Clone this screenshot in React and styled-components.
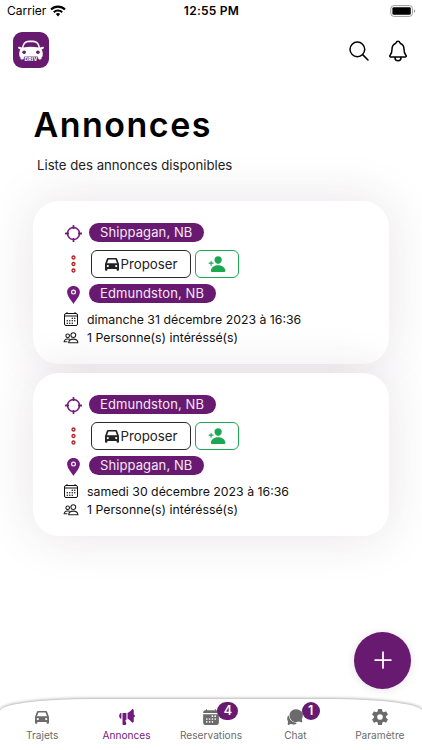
import React from 'react'
import styled, { createGlobalStyle } from 'styled-components'
import {
    IoSearchOutline,
    IoNotificationsOutline,
    IoPersonAdd,
    IoCalendarOutline,
    IoCalendar,
    IoMegaphone,
    IoChatbubbles,
    IoSettingsSharp,
    IoAdd,
} from 'react-icons/io5'

const rides = [
    {
        from: { name: 'Shippagan, NB', width: 115 },
        to: { name: 'Edmundston, NB', width: 127 },
        date: 'dimanche 31 décembre 2023 à 16:36',
        people: 1,
    },
    {
        from: { name: 'Edmundston, NB', width: 127 },
        to: { name: 'Shippagan, NB', width: 115 },
        date: 'samedi 30 décembre 2023 à 16:36',
        people: 1,
    },
]

const tabs = [
    { label: 'Trajets', icon: <CarIcon /> },
    { label: 'Annonces', icon: <IoMegaphone />, active: true },
    { label: 'Reservations', icon: <IoCalendar />, badge: 4 },
    { label: 'Chat', icon: <IoChatbubbles />, badge: 1 },
    { label: 'Paramètre', icon: <IoSettingsSharp /> },
]

function CarIcon() {
    return (
        <svg width="1em" height="1em" viewBox="0 0 18 18" fill="currentColor">
            <path
                fillRule="evenodd"
                d="M5.400 3h7.200c.9 0 1.500.5 1.700 1.300L16 9v5.700c0 .7-.3 1-.9 1h-.6c-.6 0-.9-.3-.9-1V14H4.400v.7c0 .7-.3 1-.9 1h-.6c-.6 0-.9-.3-.9-1V9l1.700-4.700C3.900 3.500 4.500 3 5.400 3zM5.500 4.500 4 8.300h10l-1.500-3.800zM4.800 10a1.100 1.100 0 1 0 0 2.200 1.100 1.100 0 0 0 0-2.200zm8.400 0a1.100 1.100 0 1 0 0 2.200 1.100 1.100 0 0 0 0-2.200z"
            />
        </svg>
    )
}

const WifiIcon = () => (
    <svg width="16" height="12" viewBox="0 0 16 12" fill="none" stroke="#000" strokeWidth="2.1">
        <path d="M1 4.5a10 10 0 0 1 14 0" />
        <path d="M3.8 7.2a6 6 0 0 1 8.4 0" />
        <path d="M5.8 9.1a3.1 3.1 0 0 1 4.4 0L8 11.4z" fill="#000" stroke="none" />
    </svg>
)

const BatteryIcon = () => (
    <svg width="26" height="12" viewBox="0 0 26 12">
        <rect x=".8" y=".6" width="21.6" height="10.8" rx="3" fill="none" stroke="#9b9b9b" />
        <rect x="2.4" y="2.2" width="18.4" height="7.6" rx="1.4" />
        <path d="M24 4.2c1.6.5 1.6 3.1 0 3.6z" fill="#999" />
    </svg>
)

const DrivCar = () => (
    <svg width="26" height="22" viewBox="0 0 26 22">
        <path
            d="M3.9 7.4C4.8 3.8 6.3 1.5 8.5 1c2.8-.6 6.2-.6 9 0 2.2.5 3.7 2.8 4.6 6.4l2.7-.6c1.2-.1 1.4 1.4.5 1.9l-1.7.8c1 1.6 1.3 3.5 1.1 5.8-.1 1.2-.5 1.9-1.2 2.1v1c0 1.5-3.3 1.5-3.3 0v-.9H5.8v.9c0 1.5-3.3 1.5-3.3 0v-1c-.7-.2-1.1-.9-1.2-2.1-.2-2.300.1-4.200 1.100-5.800L.7 8.700C-.2 8.200 0 6.700 1.200 6.800z"
            fill="#fff"
        />
        <path d="M5.4 7.4c.8-2.700 2-4.500 3.800-4.900 2.400-.5 5.200-.5 7.600 0 1.800.4 3 2.200 3.800 4.900-4.700-1-10.500-1-15.200 0z" fill="#681a70" />
        <circle cx="6.1" cy="12.3" r="1.8" fill="#681a70" />
        <circle cx="19.9" cy="12.3" r="1.8" fill="#681a70" />
        <rect x="6.2" y="16.6" width="13.6" height="5.4" fill="#681a70" />
    </svg>
)

const TargetIcon = () => (
    <svg width="17" height="17" viewBox="0.5 0.5 17 17" fill="none" stroke="#731b7d" strokeWidth="1.6">
        <circle cx="9" cy="9" r="6" />
        <path d="M9 1.2v2.5M9 14.3v2.5M1.2 9h2.5M14.3 9h2.5" strokeWidth="1.8" strokeLinecap="round" />
    </svg>
)

const DotsIcon = () => (
    <svg width="5" height="18" viewBox="0 0 5 18" fill="none" stroke="#b51d20" strokeWidth="1.3">
        <circle cx="2.5" cy="2.5" r="1.5" />
        <circle cx="2.5" cy="9" r="1.5" />
        <circle cx="2.5" cy="15.5" r="1.5" />
    </svg>
)

const PinIcon = () => (
    <svg width="13" height="18" viewBox="0 0 13 18">
        <path d="M6.5 0C2.9 0 .1 2.7.1 6.1c0 4.2 4.7 9.3 6.4 11.8 1.7-2.5 6.4-7.6 6.4-11.8C12.9 2.7 10.1 0 6.5 0z" fill="#731b7d" />
        <circle cx="6.5" cy="6.1" r="1.9" fill="none" stroke="#fff" strokeWidth="1.2" />
    </svg>
)

const PeopleIcon = () => (
    <svg viewBox="-0.5 -2 16 16" fill="none" stroke="#222" strokeWidth="1.1" strokeLinejoin="round">
        <circle cx="9.8" cy="3.1" r="2.4" />
        <path d="M5.2 10.7c.1-2.5 2-3.6 4.6-3.6s4.4 1.1 4.6 3.6z" />
        <circle cx="4.2" cy="3.8" r="1.8" />
        <path d="M6.3 7.3C3.5 6.4.8 7.4.6 9.8h3.3" />
    </svg>
)

const Ride = ({ ride }) => (
    <Card>
        <Row>
            <Mark $drop={1}><TargetIcon /></Mark>
            <City $width={ride.from.width}>{ride.from.name}</City>
        </Row>
        <Actions>
            <Mark><DotsIcon /></Mark>
            <ProposeButton><CarIcon />Proposer</ProposeButton>
            <InviteButton aria-label="Inviter"><IoPersonAdd /></InviteButton>
        </Actions>
        <Row>
            <Mark $drop={3}><PinIcon /></Mark>
            <City $width={ride.to.width}>{ride.to.name}</City>
        </Row>
        <Details>
            <Detail>
                <IoCalendarOutline />
                <span>{ride.date}</span>
            </Detail>
            <Detail>
                <PeopleIcon />
                <span>{ride.people} Personne(s) intéréssé(s)</span>
            </Detail>
        </Details>
    </Card>
)

const App = () => {
    return (
        <Screen>
            <GlobalStyle />
            <StatusBar>
                <Carrier>Carrier <WifiIcon /></Carrier>
                <Clock>12:55 PM</Clock>
                <Battery><BatteryIcon /></Battery>
            </StatusBar>
            <Header>
                <Logo>
                    <DrivCar />
                    <LogoName>DRIV</LogoName>
                </Logo>
                <HeaderIcons>
                    <IoSearchOutline />
                    <IoNotificationsOutline />
                </HeaderIcons>
            </Header>
            <Title>Annonces</Title>
            <Subtitle>Liste des annonces disponibles</Subtitle>
            <List>
                {rides.map((ride) => <Ride key={ride.date} ride={ride} />)}
            </List>
            <AddButton aria-label="Ajouter"><IoAdd /></AddButton>
            <TabBar>
                {tabs.map(({ label, icon, badge, active }) => (
                    <Tab key={label} $active={active}>
                        <TabIcon>
                            {icon}
                            {badge && <Badge>{badge}</Badge>}
                        </TabIcon>
                        {label}
                    </Tab>
                ))}
            </TabBar>
        </Screen>
    )
}

export default App

const GlobalStyle = createGlobalStyle`
    * {
        box-sizing: border-box;
    }

    body {
        margin: 0;
        background: #fff;
    }

    button {
        font: inherit;
        padding: 0;
        background: none;
    }

    svg {
        display: block;
        flex-shrink: 0;
    }
`

const Screen = styled.div`
    position: relative;
    display: flex;
    flex-direction: column;
    width: 422px;
    height: 750px;
    overflow: hidden;
    background: #fff;
    color: #111;
    font-family: Inter, "Liberation Sans", sans-serif;
`

const StatusBar = styled.div`
    display: grid;
    grid-template-columns: 1fr auto 1fr;
    align-items: center;
    height: 22px;
    padding: 0 6px 0 7px;
    color: #000;
`

const Carrier = styled.div`
    display: flex;
    align-items: center;
    gap: 4px;
    margin-top: -1px;
    font-size: 12px;
`

const Clock = styled.div`
    margin-top: -1px;
    font-size: 12px;
    font-weight: 600;
    letter-spacing: 0.25px;
`

const Battery = styled.div`
    justify-self: end;
    margin-top: -1px;
`

const Header = styled.header`
    display: flex;
    justify-content: space-between;
    height: 46px;
    padding: 10px 12px 0 13px;
`

const Logo = styled.div`
    display: flex;
    flex-direction: column;
    align-items: center;
    width: 36px;
    height: 36px;
    padding-top: 8px;
    border-radius: 9px;
    background: #681a70;
`

const LogoName = styled.div`
    margin-top: -6px;
    color: #fff;
    font-size: 5px;
    line-height: 6px;
    font-weight: 800;
    letter-spacing: 0.2px;
`

const HeaderIcons = styled.div`
    display: flex;
    align-items: center;
    gap: 15px;
    height: 38px;
    font-size: 24px;
    color: #000;
`

const Title = styled.h1`
    margin: 34px 0 0 33.5px;
    font-size: 34px;
    line-height: 46px;
    font-weight: 600;
    letter-spacing: 1.5px;
    color: #000;
`

const Subtitle = styled.p`
    margin: 7px 0 0 37px;
    font-size: 13.2px;
    line-height: 20px;
    color: #222;
`

const List = styled.main`
    display: flex;
    flex-direction: column;
    gap: 9px;
    margin: 26px 33px 0;
`

const Card = styled.article`
    height: 163px;
    padding: 22px 30px 0;
    border-radius: 26px;
    background: #fff;
    box-shadow: 0 0 50px rgba(80, 50, 70, 0.13);
`

const Row = styled.div`
    display: flex;
    align-items: center;
    gap: 5px;
    height: 19px;
`

const Mark = styled.div`
    display: flex;
    justify-content: center;
    width: 21px;
    margin-top: ${({ $drop }) => $drop || 0}px;
`

const City = styled.div`
    width: ${({ $width }) => $width}px;
    height: 19px;
    padding-left: 11px;
    border-radius: 10px;
    background: #681a70;
    color: #f5e7f7;
    font-size: 13px;
    line-height: 18px;
    letter-spacing: 0.1px;
    white-space: nowrap;
`

const Actions = styled.div`
    display: flex;
    align-items: center;
    height: 42px;
    padding-top: 2px;
`

const ProposeButton = styled.button`
    display: flex;
    align-items: center;
    justify-content: center;
    width: 100px;
    height: 28px;
    margin-left: 7px;
    border: 1px solid #2a2a2e;
    border-radius: 6px;
    color: #222;
    font-size: 13.3px;

    svg {
        margin: 0 -1px 0 -1px;
        font-size: 18px;
    }
`

const InviteButton = styled.button`
    display: flex;
    align-items: center;
    justify-content: center;
    width: 44px;
    height: 28px;
    margin-left: 4px;
    border: 1px solid #1ba851;
    border-radius: 6px;
    color: #1ba851;
    font-size: 18px;
`

const Details = styled.div`
    display: grid;
    gap: 0.5px;
    margin-top: 7px;
`

const Detail = styled.div`
    display: flex;
    align-items: center;
    gap: 8px;
    height: 18px;
    font-size: 12.3px;
    white-space: nowrap;

    svg {
        width: 16px;
        height: 16px;
    }
`

const AddButton = styled.button`
    position: absolute;
    right: 11px;
    bottom: 61px;
    display: flex;
    align-items: center;
    justify-content: center;
    width: 57px;
    height: 57px;
    padding-bottom: 1px;
    border: 0;
    border-radius: 50%;
    background: #681a70;
    color: #fff;
    font-size: 28px;
    box-shadow: 0 1px 8px rgba(0, 0, 0, 0.12);
`

const TabBar = styled.nav`
    display: grid;
    grid-template-columns: repeat(5, 1fr);
    height: 51px;
    margin-top: auto;
    padding-top: 9px;
    border-radius: 90px 90px 0 0 / 12px 12px 0 0;
    background: #fff;
    box-shadow: 0 -1px 3px rgba(0, 0, 0, 0.3);
`

const Tab = styled.div`
    display: flex;
    flex-direction: column;
    align-items: center;
    gap: 2px;
    color: ${({ $active }) => ($active ? '#731b7d' : '#6b6b6b')};
    font-size: 10.15px;
    line-height: 14px;
`

const TabIcon = styled.div`
    position: relative;
    font-size: 18px;
`

const Badge = styled.span`
    position: absolute;
    left: 15.5px;
    top: -6px;
    height: 18px;
    padding: 0 6.2px;
    border-radius: 10px;
    background: #681a70;
    color: #fff;
    font-size: 12.5px;
    line-height: 18px;
    font-weight: 600;
`
